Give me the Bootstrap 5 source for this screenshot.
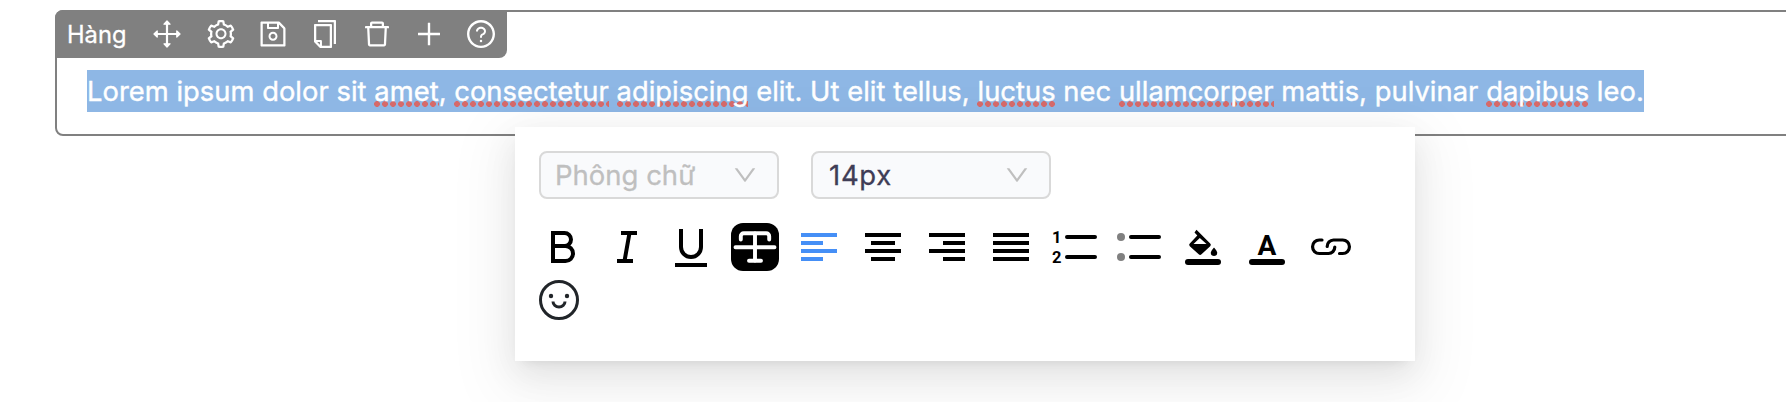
<!DOCTYPE html>
<html lang="vi">
<head>
<meta charset="utf-8">
<meta name="viewport" content="width=device-width, initial-scale=1">
<title>Hàng</title>
<link href="https://cdn.jsdelivr.net/npm/bootstrap@5.3.0/dist/css/bootstrap.min.css" rel="stylesheet">
<script src="https://cdn.jsdelivr.net/npm/bootstrap@5.3.0/dist/js/bootstrap.bundle.min.js"></script>
<style>
body { font-family: Inter, "Liberation Sans", sans-serif; background: #fff; height: 402px; }
.block-row { margin: 10px -40px 0 55px; height: 126px; border: 2px solid #808080; border-radius: 8px; }
.row-tools { width: 452px; height: 48px; margin: -2px 0 0 -2px; padding: 0 12px 0 12px; background: #808080; border-radius: 8px 0 8px 0; color: #fff; }
.row-tools .tool { width: 28px; height: 28px; fill: #fff; flex: none; }
.row-tools .title { width: 86px; font-size: 23.7px; line-height: 46px; padding-top: 1px; -webkit-text-stroke: .3px #fff; }
.tool-set { gap: 24px; }
.edit-line { margin: 12px 0 0 30px; width: 1557px; height: 42px; line-height: 43px; font-size: 27.3px; background: #8eb7e5; color: #fff; white-space: nowrap; letter-spacing: .05px; -webkit-text-stroke: .4px #fff; }
.typo { display: inline-block; line-height: 43px; height: 42px; vertical-align: top; background: radial-gradient(circle at 3px 3px, #d66a6a 2.6px, transparent 3.2px) 0 31px / 8px 6px repeat-x; }
.popup { left: 515px; top: 127px; width: 900px; height: 234px; padding: 24px; background: #fff; box-shadow: 0 6px 12px -8px rgba(0,0,0,.12), 0 12px 32px rgba(0,0,0,.08), 0 18px 56px 16px rgba(0,0,0,.05); }
.picker { width: 240px; height: 48px; border: 2px solid #d9d9d9; border-radius: 8px; background: #f9fafc; font-size: 27.5px; line-height: 44px; padding: 0 20px 0 14px; color: #3f3d56; -webkit-text-stroke: .3px; }
.picker .size-value { padding-left: 2px; letter-spacing: .7px; }
.picker svg { width: 24px; height: 24px; fill: #bfbfbf; }
.picker.unset { color: #bfbfbf; }
.tools { gap: 9px 16px; margin-top: 24px; }
.fmt { width: 48px; height: 48px; background: none; border: 0; }
.fmt svg, .smile svg { display: block; }
.smile { width: 40px; height: 40px; background: none; border: 0; }
</style>
</head>
<body class="overflow-hidden position-relative">
<section class="block-row">
  <div class="row-tools d-flex align-items-center">
    <span class="title">Hàng</span>
    <div class="tool-set d-flex align-items-center">
      <svg class="tool" viewBox="0 0 28 28"><path d="M14 2v24M2 14h24" stroke="#fff" stroke-width="2.200"/><path d="M11 4.200 14 1l3 3.200zM11 23.800 14 27l3-3.200zM4.200 11 1 14l3.200 3zM23.800 11 27 14l-3.200 3z" stroke="#fff" stroke-width="1.300" stroke-linejoin="round"/></svg>
      <svg class="tool" style="margin-left:2px" viewBox="64 64 896 896"><path d="M924.8 625.7l-65.5-56c3.100-19 4.700-38.400 4.700-57.800s-1.600-38.800-4.700-57.800l65.500-56a32.030 32.030 0 0 0 9.300-35.200l-.9-2.600a443.740 443.740 0 0 0-79.700-137.900l-1.800-2.100a32.120 32.120 0 0 0-35.100-9.500l-81.300 28.900c-30-24.600-63.500-44-99.700-57.600l-15.700-85a32.050 32.050 0 0 0-25.800-25.700l-2.700-.5c-52.100-9.400-106.900-9.400-159 0l-2.700.5a32.050 32.050 0 0 0-25.800 25.700l-15.800 85.400a351.860 351.860 0 0 0-99 57.400l-81.900-29.100a32 32 0 0 0-35.100 9.500l-1.800 2.100a446.020 446.020 0 0 0-79.700 137.900l-.9 2.600c-4.500 12.500-.8 26.500 9.300 35.200l66.300 56.600c-3.100 18.800-4.600 38-4.600 57.100 0 19.200 1.500 38.400 4.600 57.100L99 625.500a32.030 32.030 0 0 0-9.300 35.200l.9 2.600c18.100 50.400 44.900 96.900 79.700 137.900l1.800 2.100a32.120 32.120 0 0 0 35.100 9.500l81.900-29.100c29.800 24.500 63.100 43.900 99 57.400l15.800 85.400a32.050 32.050 0 0 0 25.800 25.700l2.700.5a449.400 449.400 0 0 0 159 0l2.700-.5a32.050 32.050 0 0 0 25.800-25.700l15.700-85a350 350 0 0 0 99.700-57.600l81.300 28.900a32 32 0 0 0 35.100-9.500l1.800-2.100c34.800-41.100 61.600-87.500 79.700-137.900l.9-2.600c4.500-12.300.8-26.300-9.300-35zM788.300 465.900c2.500 15.100 3.800 30.600 3.800 46.100s-1.300 31-3.800 46.100l-6.600 40.100 74.700 63.900a370.030 370.030 0 0 1-42.600 73.600L721 702.800l-31.400 25.800c-23.900 19.600-50.500 35-79.300 45.800l-38.100 14.300-17.900 97a377.500 377.500 0 0 1-85 0l-17.900-97.200-37.800-14.500c-28.500-10.800-55-26.200-78.700-45.700l-31.400-25.900-93.400 33.200c-17-22.900-31.200-47.600-42.600-73.600l75.500-64.500-6.500-40c-2.400-14.900-3.700-30.300-3.700-45.500 0-15.300 1.200-30.600 3.700-45.500l6.500-40-75.500-64.500c11.300-26.100 25.600-50.700 42.600-73.600l93.400 33.200 31.400-25.900c23.700-19.500 50.200-34.900 78.700-45.700l37.900-14.300 17.900-97.200c28.100-3.200 56.800-3.200 85 0l17.900 97 38.100 14.300c28.700 10.800 55.400 26.200 79.300 45.800l31.400 25.800 92.800-32.900c17 22.900 31.200 47.600 42.600 73.600L781.800 426l6.500 39.900zM512 326c-97.200 0-176 78.800-176 176s78.800 176 176 176 176-78.800 176-176-78.800-176-176-176zm79.200 255.200A111.600 111.600 0 0 1 512 614c-29.900 0-58-11.700-79.200-32.800A111.600 111.600 0 0 1 400 502c0-29.900 11.700-58 32.800-79.200C454 401.600 482.100 390 512 390c29.900 0 58 11.600 79.200 32.800A111.600 111.600 0 0 1 624 502c0 29.900-11.700 58-32.800 79.200z"/></svg>
      <svg class="tool" viewBox="64 64 896 896"><path d="M893.3 293.3L730.7 130.7c-7.500-7.500-16.700-13-26.700-16V112H144c-17.700 0-32 14.300-32 32v736c0 17.700 14.300 32 32 32h736c17.700 0 32-14.300 32-32V338.500c0-17-6.700-33.200-18.700-45.200zM384 184h256v104H384V184zm456 656H184V184h136v136c0 17.700 14.300 32 32 32h320c17.700 0 32-14.300 32-32V205.800l136 136V840zM512 442c-79.500 0-144 64.500-144 144s64.500 144 144 144 144-64.500 144-144-64.500-144-144-144zm0 224c-44.200 0-80-35.800-80-80s35.800-80 80-80 80 35.800 80 80-35.800 80-80 80z"/></svg>
      <svg class="tool" viewBox="64 64 896 896"><path d="M832 64H296c-4.400 0-8 3.600-8 8v56c0 4.400 3.600 8 8 8h496v688c0 4.400 3.600 8 8 8h56c4.400 0 8-3.600 8-8V96c0-17.700-14.300-32-32-32zM704 192H192c-17.700 0-32 14.300-32 32v530.700c0 8.500 3.400 16.600 9.400 22.600l173.300 173.300c2.200 2.200 4.700 4 7.400 5.500v1.900h4.200c3.500 1.300 7.200 2 11 2H704c17.700 0 32-14.300 32-32V224c0-17.700-14.300-32-32-32zM350 856.200L263.900 770H350v86.200zM664 888H414V746c0-22.100-17.900-40-40-40H232V264h432v624z"/></svg>
      <svg class="tool" viewBox="64 64 896 896"><path d="M360 184h-8c4.400 0 8-3.600 8-8v8h304v-8c0 4.400 3.600 8 8 8h-8v72h72v-80c0-35.300-28.700-64-64-64H352c-35.300 0-64 28.700-64 64v80h72v-72zm504 72H160c-17.700 0-32 14.300-32 32v32c0 4.400 3.600 8 8 8h60.400l24.700 523c1.600 34.100 29.800 61 63.900 61h454c34.200 0 62.300-26.800 63.900-61l24.700-523H888c4.400 0 8-3.600 8-8v-32c0-17.700-14.300-32-32-32zM731.300 840H292.700l-24.200-512h487l-24.200 512z"/></svg>
      <svg class="tool" viewBox="64 64 896 896"><path d="M482 152h60q8 0 8 8v704q0 8-8 8h-60q-8 0-8-8V160q0-8 8-8zM168 474h688q8 0 8 8v60q0 8-8 8H168q-8 0-8-8v-60q0-8 8-8z"/></svg>
      <svg class="tool" viewBox="64 64 896 896"><path d="M512 64C264.600 64 64 264.600 64 512s200.600 448 448 448 448-200.600 448-448S759.400 64 512 64zm0 820c-205.400 0-372-166.600-372-372s166.600-372 372-372 372 166.600 372 372-166.600 372-372 372z"/><path d="M623.600 316.700C593.600 290.400 554 276 512 276s-81.600 14.500-111.600 40.700C369.200 344 352 380.700 352 420v7.600c0 4.400 3.600 8 8 8h48c4.400 0 8-3.600 8-8V420c0-44.100 43.100-80 96-80s96 35.900 96 80c0 31.100-22 59.600-56.100 72.700-21.200 8.100-39.200 22.300-52.100 40.900-13.100 19-19.900 41.800-19.900 64.900V620c0 4.400 3.600 8 8 8h48c4.400 0 8-3.600 8-8v-22.700a48.300 48.300 0 0 1 30.900-44.800c59-22.700 97.100-74.700 97.100-132.500.1-39.300-17.100-76-48.300-103.300zM472 732a40 40 0 1 0 80 0 40 40 0 1 0-80 0z"/></svg>
    </div>
  </div>
  <p class="edit-line mb-0">Lorem ipsum dolor sit <span class="typo">amet</span>, <span class="typo">consectetur</span> <span class="typo">adipiscing</span> elit. Ut elit tellus, <span class="typo">luctus</span> nec <span class="typo">ullamcorper</span> mattis, pulvinar <span class="typo">dapibus</span> leo.</p>
</section>

<div class="popup position-absolute">
  <div class="d-flex" style="gap:32px">
    <div class="picker unset d-flex justify-content-between align-items-center"><span>Phông chữ</span><svg viewBox="64 64 896 896"><path d="M884 256h-75c-5.100 0-9.900 2.500-12.900 6.600L512 654.200 227.900 262.600c-3-4.100-7.800-6.600-12.900-6.600h-75c-6.500 0-10.300 7.400-6.500 12.700l352.600 486.100c12.800 17.600 39 17.600 51.700 0l352.600-486.100c3.900-5.300.1-12.700-6.400-12.700z"/></svg></div>
    <div class="picker d-flex justify-content-between align-items-center"><span class="size-value">14px</span><svg viewBox="64 64 896 896"><path d="M884 256h-75c-5.100 0-9.900 2.500-12.900 6.600L512 654.200 227.900 262.600c-3-4.100-7.800-6.600-12.900-6.600h-75c-6.500 0-10.300 7.400-6.500 12.700l352.600 486.100c12.800 17.600 39 17.600 51.700 0l352.600-486.100c3.900-5.300.1-12.700-6.400-12.700z"/></svg></div>
  </div>
  <div class="tools d-flex flex-wrap">
    <button class="fmt p-0"><svg width="48" height="48" fill="none" stroke="#000" stroke-width="4"><path d="M14 10h11.500a6.500 6.500 0 0 1 0 13H14M25.500 23h1a7.500 7.500 0 0 1 0 15H14M14 8v32"/></svg></button>
    <button class="fmt p-0"><svg width="48" height="48" fill="none" stroke="#000" stroke-width="4"><path d="M18 10h16M14 38h16M26.500 10l-5 28"/></svg></button>
    <button class="fmt p-0"><svg width="48" height="48" fill="none" stroke="#000" stroke-width="4"><path d="M14 6v18a10 10 0 0 0 20 0V6M8 42h32"/></svg></button>
    <button class="fmt p-0"><svg width="48" height="48" fill="none" stroke="#fff" stroke-linecap="round"><rect width="48" height="48" rx="12" fill="#000" stroke="none"/><path d="M9.800 16.500v-3.200a3 3 0 0 1 3-3h22.400a3 3 0 0 1 3 3v3.200M24 10v28M18 37.800h12M4.500 24.200h39" stroke-width="3.900"/></svg></button>
    <button class="fmt p-0"><svg width="48" height="48" stroke="#458ff6" stroke-width="4"><path d="M6 12h36M6 20h22M6 28h36M6 36h22"/></svg></button>
    <button class="fmt p-0"><svg width="48" height="48" stroke="#000" stroke-width="4"><path d="M6 12h36M12 20h24M6 28h36M12 36h24"/></svg></button>
    <button class="fmt p-0"><svg width="48" height="48" stroke="#000" stroke-width="4"><path d="M6 12h36M20 20h22M6 28h36M20 36h22"/></svg></button>
    <button class="fmt p-0"><svg width="48" height="48" stroke="#000" stroke-width="4"><path d="M6 12h36M6 20h36M6 28h36M6 36h36"/></svg></button>
    <button class="fmt p-0"><svg width="48" height="48" stroke="#000" stroke-width="4" stroke-linecap="round"><g fill="#000" stroke="none" font-family="Roboto" font-weight="700" font-size="16.500"><text x="1" y="20">1</text><text x="1" y="40">2</text></g><path d="M16 14h28M16 34h28"/></svg></button>
    <button class="fmt p-0"><svg width="48" height="48" stroke="#000" stroke-width="4" stroke-linecap="round"><g fill="#808080" stroke="none"><circle cx="6" cy="14" r="4"/><circle cx="6" cy="34" r="4"/></g><path d="M16 14h28M16 34h28"/></svg></button>
    <button class="fmt p-0"><svg width="48" height="48"><rect x="6" y="36" width="36" height="6" rx="3"/><path fill-rule="evenodd" d="M17.500 6.800 31.200 20.600a1.900 1.900 0 0 1 0 2.700L22.500 31.300a2 2 0 0 1-2.800 0L10.800 23.300a1.900 1.900 0 0 1 0-2.700L18.300 12.600 15.500 9.600zM20.800 14.900 14.500 21h13z"/><path d="M35 24.500s3.200 3.500 3.200 5.300a3.200 3.200 0 0 1-6.400 0c0-1.800 3.200-5.300 3.200-5.300z"/></svg></button>
    <button class="fmt p-0"><svg width="48" height="48"><text x="24" y="32" text-anchor="middle" font-family="Roboto" font-weight="700" font-size="28">A</text><rect x="6" y="36" width="36" height="6" rx="3"/></svg></button>
    <button class="fmt p-0"><svg width="48" height="48" fill="none" stroke="#000" stroke-width="3.200" stroke-linecap="round"><path d="M15 17h-2.700a6.700 6.700 0 0 0 0 13.500h9.200a6.500 6.500 0 0 0 6.300-6.500M32.500 30.500h3.200a6.700 6.700 0 0 0 0-13.500h-9.200a6.500 6.500 0 0 0-6.300 6.500"/></svg></button>
    <button class="smile p-0"><svg width="40" height="40" viewBox="0 0 40 40" fill="none" stroke="#212529" stroke-width="3"><circle cx="20" cy="20" r="18.500"/><path d="M14 21.500a6 5.500 0 0 0 12 0"/><g fill="#212529" stroke="none"><circle cx="12" cy="16" r="2.200"/><circle cx="28" cy="16" r="2.200"/></g></svg></button>
  </div>
</div>
</body>
</html>
